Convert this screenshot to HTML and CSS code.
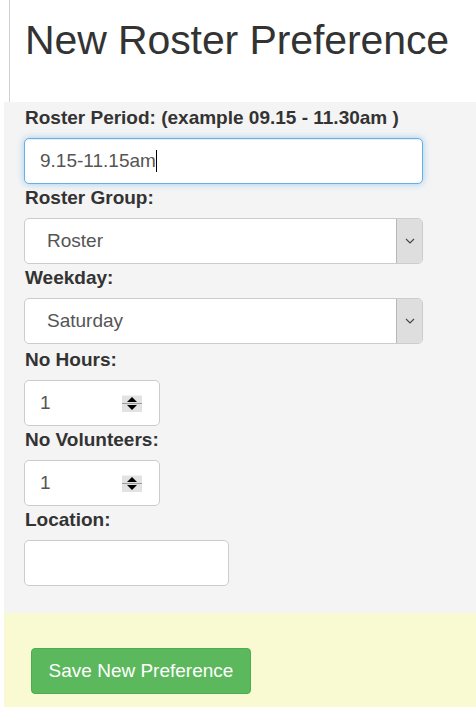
FILE: index.html
```html
<!DOCTYPE html>
<html lang="en">
<head>
<meta charset="utf-8">
<title>New Roster Preference</title>
<link rel="stylesheet" href="styles.css">
</head>
<body>
<div class="page">
  <header class="head">
    <h1 class="title">New Roster Preference</h1>
  </header>
  <form class="panel">
    <div class="group">
      <label class="label">Roster Period: (example 09.15 - 11.30am )</label>
      <div class="field wide focus"><span class="val">9.15-11.15am</span><span class="caret"></span></div>
    </div>
    <div class="group">
      <label class="label">Roster Group:</label>
      <div class="field wide select"><span class="val sel">Roster</span>
        <span class="arrow"><svg width="10" height="6" viewBox="0 0 10 6"><path d="M1 1 L5 5 L9 1" fill="none" stroke="#444" stroke-width="1.1"/></svg></span>
      </div>
    </div>
    <div class="group">
      <label class="label">Weekday:</label>
      <div class="field wide select"><span class="val sel">Saturday</span>
        <span class="arrow"><svg width="10" height="6" viewBox="0 0 10 6"><path d="M1 1 L5 5 L9 1" fill="none" stroke="#444" stroke-width="1.1"/></svg></span>
      </div>
    </div>
    <div class="group num-group">
      <label class="label">No Hours:</label>
      <div class="field num"><span class="val">1</span>
        <span class="spin"><span class="up"></span><span class="down"></span></span>
      </div>
    </div>
    <div class="group">
      <label class="label">No Volunteers:</label>
      <div class="field num"><span class="val">1</span>
        <span class="spin"><span class="up"></span><span class="down"></span></span>
      </div>
    </div>
    <div class="group">
      <label class="label">Location:</label>
      <div class="field loc"></div>
    </div>
  </form>
  <div class="footer">
    <button class="btn" type="button">Save New Preference</button>
  </div>
</div>
</body>
</html>
```
FILE: styles.css
```css
html, body {
  margin: 0;
  padding: 0;
  background: #fff;
}
body {
  font-family: "Liberation Sans", Arial, sans-serif;
  color: #333;
}
.page {
  display: flex;
  flex-direction: column;
  min-height: 707px;
}
.head {
  margin-left: 9px;
  border-left: 1px solid #d0d0d0;
  padding: 18px 0 39px 15px;
  height: 45px;
}
.title {
  margin: 0;
  font-size: 41px;
  font-weight: normal;
  line-height: 45px;
  color: #333;
  letter-spacing: -0.1px;
}
.panel {
  margin: 0 0 0 4px;
  background: #f4f4f4;
  padding: 2px 0 27px 20px;
  display: flex;
  flex-direction: column;
}
.group {
  display: flex;
  flex-direction: column;
  align-items: flex-start;
}
.num-group {
  margin-top: 2px;
}
.label {
  font-size: 19px;
  font-weight: bold;
  line-height: 27px;
  margin: 0 0 7px 1px;
  color: #333;
}
.field {
  box-sizing: border-box;
  height: 46px;
  background: #fff;
  border: 1px solid #ccc;
  border-radius: 5px;
  display: flex;
  align-items: center;
  font-size: 19px;
  color: #555;
  padding-left: 15px;
}
.wide {
  width: 399px;
}
.focus {
  border-color: #66afe9;
  box-shadow: 0 0 7px rgba(102, 175, 233, 0.6), inset 0 1px 1px rgba(0, 0, 0, 0.075);
}
.caret {
  display: inline-block;
  width: 1px;
  height: 22px;
  background: #000;
}
.select {
  padding-left: 0;
  padding-right: 0;
  align-items: stretch;
}
.sel {
  flex: 1;
  display: flex;
  align-items: center;
  padding-left: 22px;
}
.arrow {
  width: 25px;
  background: #dedede;
  border-left: 1px solid #b8b8b8;
  border-radius: 0 4px 4px 0;
  display: flex;
  align-items: center;
  justify-content: center;
}
.num {
  width: 136px;
  justify-content: space-between;
  padding-right: 17px;
}
.spin {
  width: 20px;
  height: 16px;
  background: #e2e2e2;
  display: flex;
  flex-direction: column;
  align-items: center;
  justify-content: space-around;
  border-top: 1px solid #f2f2f2;
  position: relative;
}
.spin::after {
  content: "";
  position: absolute;
  left: 0;
  right: 0;
  top: 7px;
  height: 1px;
  background: #9a9a9a;
}
.up {
  width: 0;
  height: 0;
  border-left: 5px solid transparent;
  border-right: 5px solid transparent;
  border-bottom: 5px solid #000;
}
.down {
  width: 0;
  height: 0;
  border-left: 5px solid transparent;
  border-right: 5px solid transparent;
  border-top: 5px solid #000;
}
.loc {
  width: 205px;
}
.footer {
  flex: 1;
  margin-left: 4px;
  background: #f9f9d2;
  padding: 35px 0 0 27px;
}
.btn {
  font-family: "Liberation Sans", Arial, sans-serif;
  font-size: 19px;
  color: #fff;
  background: #5cb85c;
  border: 1px solid #4cae4c;
  border-radius: 4px;
  width: 220px;
  height: 46px;
  padding: 0;
  cursor: pointer;
}
```
